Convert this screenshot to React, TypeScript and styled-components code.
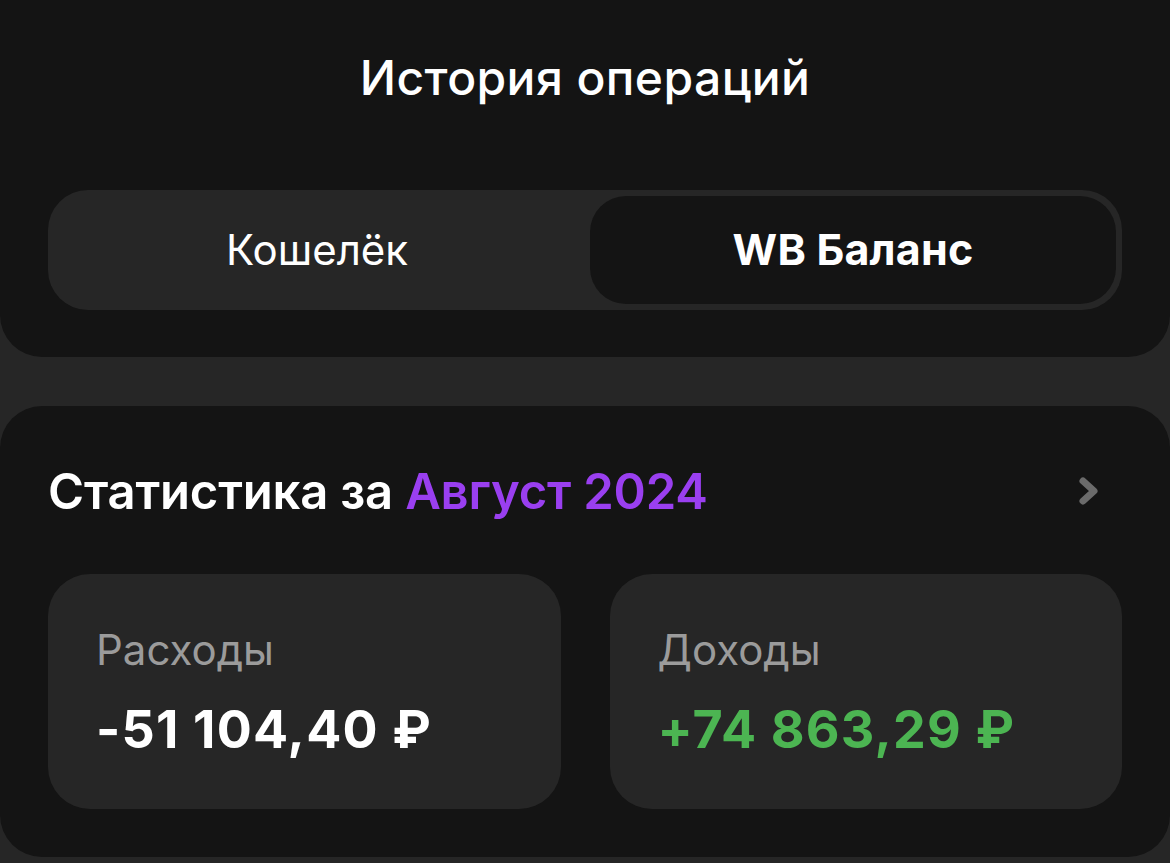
import { createGlobalStyle } from "styled-components";
import styled from "styled-components";

const GlobalStyle = createGlobalStyle`
  html, body {
    margin: 0;
    padding: 0;
    background: #262626;
  }
  body {
    font-family: Inter, "Noto Sans", sans-serif;
    color: #ffffff;
    -webkit-font-smoothing: antialiased;
  }
`;

const Page = styled.div`
  width: 1170px;
  min-height: 863px;
  background: #262626;
  display: flex;
  flex-direction: column;
  gap: 49px;
`;

const TopCard = styled.section`
  background: #141414;
  border-radius: 0 0 42px 42px;
  padding: 50px 48px 47px;
  display: flex;
  flex-direction: column;
  align-items: center;
`;

const Title = styled.h1`
  margin: 0;
  font-size: 48px;
  line-height: 56px;
  font-weight: 500;
  letter-spacing: 0.4px;
`;

const Segmented = styled.div`
  margin-top: 84px;
  width: 100%;
  height: 120px;
  box-sizing: border-box;
  padding: 6px;
  background: #262626;
  border-radius: 40px;
  display: grid;
  grid-template-columns: 536px 1fr;
`;

const Segment = styled.div<{ $active?: boolean }>`
  display: flex;
  align-items: center;
  justify-content: center;
  border-radius: 36px;
  background: ${(p) => (p.$active ? "#141414" : "transparent")};
  font-size: ${(p) => (p.$active ? "43px" : "42px")};
  font-weight: ${(p) => (p.$active ? 700 : 400)};
  letter-spacing: ${(p) => (p.$active ? "0.2px" : "0")};
  color: #ffffff;
  padding: ${(p) => (p.$active ? "0 0 2px" : "0 10px 2px 0")};
`;

const StatsCard = styled.section`
  background: #141414;
  border-radius: 42px;
  padding: 56px 48px 48px;
`;

const Header = styled.div`
  display: flex;
  align-items: center;
  justify-content: space-between;
  height: 60px;
`;

const HeaderText = styled.h2`
  margin: 0;
  font-size: 49px;
  line-height: 60px;
  font-weight: 600;
  letter-spacing: -0.2px;
`;

const Accent = styled.span`
  color: #9a3ff0;
`;

const Chevron = styled.svg`
  width: 30px;
  height: 36px;
  margin-right: 18px;
  margin-top: -2px;
`;

const Cards = styled.div`
  margin-top: 52px;
  display: grid;
  grid-template-columns: 1fr 1fr;
  gap: 49px;
`;

const StatBox = styled.div`
  height: 235px;
  box-sizing: border-box;
  background: #262626;
  border-radius: 42px;
  padding: 50px 48px 0 48px;
  display: flex;
  flex-direction: column;
`;

const Label = styled.div`
  font-size: 42px;
  line-height: 52px;
  color: #9b9b9b;
  font-weight: 400;
`;

const Amount = styled.div<{ $positive?: boolean }>`
  margin-top: 24px;
  font-size: 52px;
  line-height: 60px;
  font-weight: 700;
  letter-spacing: 1.2px;
  color: ${(p) => (p.$positive ? "#4cb552" : "#ffffff")};
`;

export default function App() {
  return (
    <>
      <GlobalStyle />
      <Page>
        <TopCard>
          <Title>История операций</Title>
          <Segmented>
            <Segment>Кошелёк</Segment>
            <Segment $active>WB Баланс</Segment>
          </Segmented>
        </TopCard>
        <StatsCard>
          <Header>
            <HeaderText>
              Статистика за <Accent>Август 2024</Accent>
            </HeaderText>
            <Chevron viewBox="0 0 30 36">
              <path
                d="M9 8 L20 18 L9 28"
                fill="none"
                stroke="#6b6b6b"
                strokeWidth="7"
                strokeLinecap="round"
                strokeLinejoin="round"
              />
            </Chevron>
          </Header>
          <Cards>
            <StatBox>
              <Label>Расходы</Label>
              <Amount>-51 104,40 ₽</Amount>
            </StatBox>
            <StatBox>
              <Label>Доходы</Label>
              <Amount $positive>+74 863,29 ₽</Amount>
            </StatBox>
          </Cards>
        </StatsCard>
      </Page>
    </>
  );
}
